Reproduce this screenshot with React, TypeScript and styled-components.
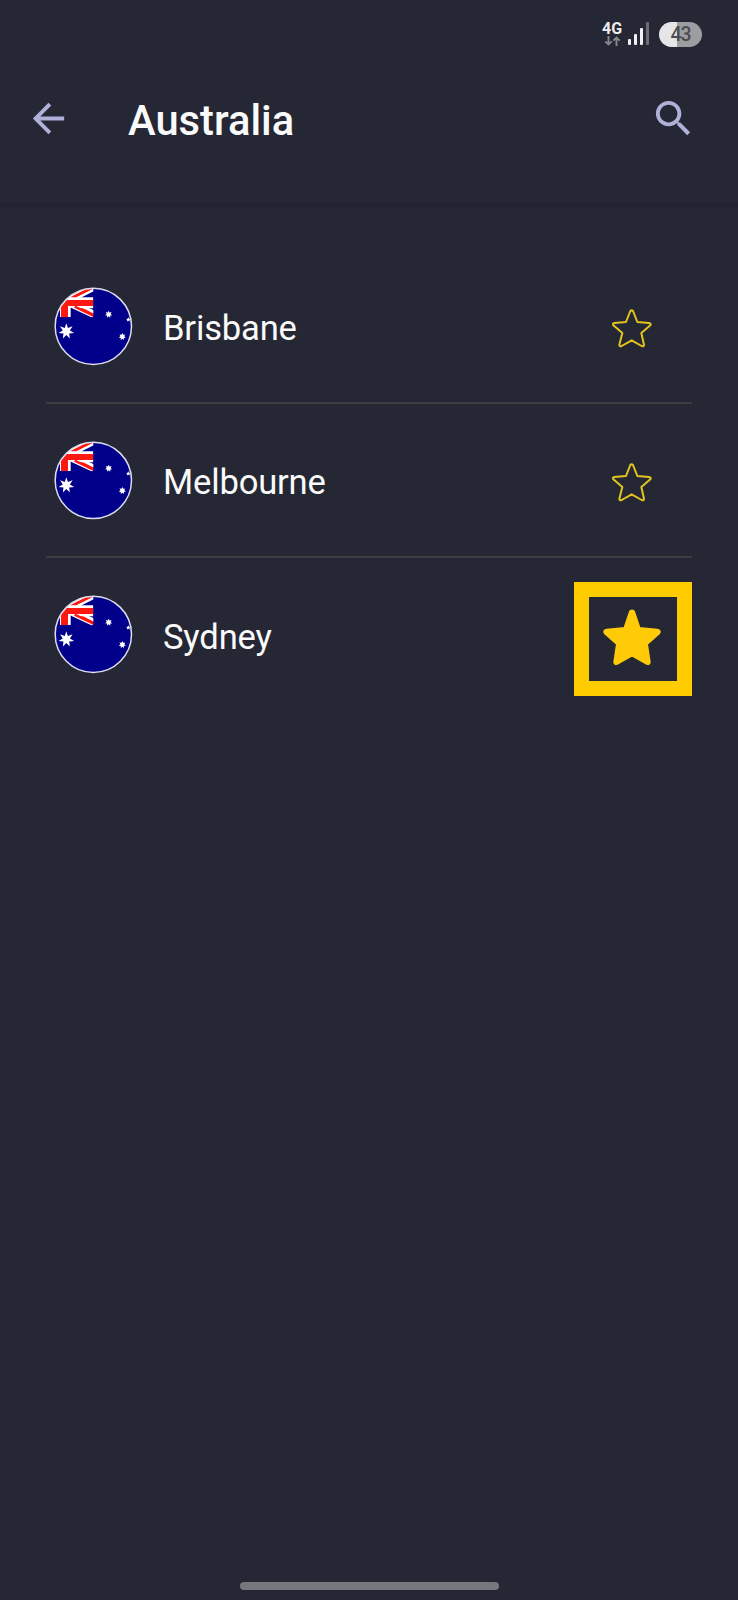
import React from "react";
import styled, { createGlobalStyle } from "styled-components";

const GlobalStyle = createGlobalStyle`
  * { box-sizing: border-box; }
  html, body { margin: 0; background: #252734; }
  svg { display: block; flex: none; }
`;

const Screen = styled.main`
  display: flex;
  flex-direction: column;
  width: 738px;
  height: 1600px;
  background: #252734;
  color: #fafafa;
  font-family: Roboto, "Noto Sans", sans-serif;
`;

const StatusBar = styled.div`
  display: flex;
  align-items: flex-start;
  justify-content: flex-end;
  height: 68px;
  padding: 22px 36px 0 0;
`;

const Network = styled.div`
  display: flex;
  flex-direction: column;
  align-items: center;
  width: 22px;
  margin-right: 5px;
  font: 700 16px/13px Roboto, sans-serif;
  color: #ececef;
`;

const NetworkArrows = styled.svg`
  margin-top: 1px;
`;

const Bars = styled.div`
  display: flex;
  align-items: flex-end;
  gap: 3px;
  height: 23px;
  margin-right: 10px;
`;

const Bar = styled.i<{ $height: number; $dim?: boolean }>`
  width: 3px;
  height: ${(p) => p.$height}px;
  border-radius: 1px;
  background: ${(p) => (p.$dim ? "#6b6c75" : "#f0f0f2")};
`;

const Battery = styled.div`
  width: 43px;
  height: 25px;
  border-radius: 13px;
  background: linear-gradient(90deg, #e6e6e8 43%, #9c9da1 43%);
  color: #4c4d52;
  font: 500 19.5px/26px Roboto, sans-serif;
  letter-spacing: -1px;
  text-align: center;
`;

const Header = styled.header`
  display: flex;
  align-items: flex-start;
  height: 137px;
  padding: 27px 41px 0 25px;
  border-bottom: 2px solid #22242f;
  box-shadow: 0 1px 2px rgba(30, 30, 42, 0.35);
`;

const Title = styled.h1`
  flex: 1;
  margin: 2px 0 0 56px;
  font-size: 41.7px;
  font-weight: 500;
  line-height: 48px;
`;

const List = styled.ul`
  flex: 1;
  margin: 0;
  padding: 45px 46px 0;
  list-style: none;
`;

const Row = styled.li<{ $last?: boolean }>`
  display: flex;
  align-items: center;
  height: 154px;
  padding: ${(p) => (p.$last ? "1px" : "0")} 0 0 8px;
  border-bottom: 2px solid ${(p) => (p.$last ? "transparent" : "#3e3c40")};
`;

const City = styled.span<{ $last?: boolean }>`
  flex: 1;
  margin: ${(p) => (p.$last ? "5px" : "3px")} 0 0 30px;
  font-size: 34.6px;
  line-height: 42px;
  letter-spacing: -0.18px;
`;

const StarButton = styled.button<{ $framed?: boolean }>`
  display: flex;
  align-items: center;
  justify-content: center;
  width: 118px;
  height: 114px;
  margin: ${(p) => (p.$framed ? "9px" : "4px")} 0 0;
  padding: 0 2px ${(p) => (p.$framed ? "3px" : "0")} 0;
  border: 15px solid ${(p) => (p.$framed ? "#ffcc00" : "transparent")};
  background: transparent;
`;

const HomeArea = styled.footer`
  display: flex;
  justify-content: center;
  height: 18px;
`;

const HomePill = styled.div`
  width: 259px;
  height: 8px;
  border-radius: 4px;
  background: #76777e;
`;

function starPoints(cx: number, cy: number, outer: number, inner: number, count: number) {
  return Array.from({ length: count * 2 }, (_, i) => {
    const r = i % 2 ? inner : outer;
    const a = (Math.PI * i) / count - Math.PI / 2;
    return `${(cx + r * Math.cos(a)).toFixed(2)},${(cy + r * Math.sin(a)).toFixed(2)}`;
  }).join(" ");
}

function Flag({ id }: { id: string }) {
  return (
    <svg width="79" height="79" viewBox="30 33 237 237">
      <clipPath id={id}>
        <circle cx="148" cy="151" r="114" />
      </clipPath>
      <g clipPath={`url(#${id})`}>
        <rect x="30" y="33" width="237" height="237" fill="#00008b" />
        <path d="M30 92 76 70 150 33M76 81 150 115" stroke="#fff" strokeWidth="22" />
        <path d="M80 67 146 34M96 90 150 117" stroke="#ff1712" strokeWidth="7.5" />
        <path d="M48 36H80V123H48ZM30 64H148V97H96L80 90Z" fill="#fff" />
        <path d="M51 72H72V124H51ZM40 72H148V90H40Z" fill="#ff1712" />
        <path d="M92 92 148 119M93 61 146 35" stroke="#ff1712" strokeWidth="7" />
        <path d="M148 33H170V125H148ZM30 124H165V140H30Z" fill="#00008b" />
        <polygon points={starPoints(67, 166, 24, 11, 7)} fill="#fff" />
        <polygon points={starPoints(194, 115, 11, 6, 7)} fill="#fff" />
        <polygon points={starPoints(235, 182, 11, 6, 7)} fill="#fff" />
        <polygon points={starPoints(253, 131, 7, 3.5, 5)} fill="#fff" />
      </g>
      <circle cx="148" cy="151" r="114.5" fill="none" stroke="#dcdcec" strokeWidth="4.5" />
    </svg>
  );
}

function OutlineStar() {
  return (
    <svg width="40" height="39" viewBox="67 55 120 117" fill="none" stroke="#e3c41e" strokeWidth="6" strokeLinejoin="round">
      <path d="M122 61Q126 57 130 61L143 94 178 97Q185 98 182 104L155 127 163 162Q163 169 156 166L126 149 96 166Q89 169 89 162L98 127 71 104Q68 98 74 97L109 94Z" />
    </svg>
  );
}

function FilledStar() {
  return (
    <svg width="58" height="57" viewBox="130 116 174 171" fill="#ffcb08" stroke="#ffcb08" strokeWidth="8" strokeLinejoin="round">
      <path d="M212 124Q217 119 222 124L239 174 293 179Q303 182 297 189L261 221 269 275Q269 283 261 279L217 254 173 279Q165 283 165 275L173 221 137 189Q131 182 141 179L195 174Z" />
    </svg>
  );
}

const cities = [
  { name: "Brisbane", favorite: false },
  { name: "Melbourne", favorite: false },
  { name: "Sydney", favorite: true },
];

export default function App() {
  return (
    <>
      <GlobalStyle />
      <Screen>
        <StatusBar>
          <Network>
            4G
            <NetworkArrows width="17" height="10" viewBox="0 0 16 10" fill="none" stroke="#85868e" strokeWidth="1.9">
              <path d="M4 0V8.5M.8 5.3 4 8.5 7.2 5.3M12 10V1.5M8.8 4.7 12 1.5 15.2 4.7" />
            </NetworkArrows>
          </Network>
          <Bars>
            <Bar $height={6} />
            <Bar $height={11} />
            <Bar $height={17} />
            <Bar $height={23} $dim />
          </Bars>
          <Battery>43</Battery>
        </StatusBar>
        <Header>
          <svg width="47" height="47" viewBox="0 0 24 24" fill="#b0b0d8">
            <path d="M20 11H7.83l5.59-5.59L12 4l-8 8 8 8 1.41-1.41L7.83 13H20v-2z" />
          </svg>
          <Title>Australia</Title>
          <svg width="47" height="47" viewBox="0 0 24 24" fill="#b0b0d8">
            <path d="M15.5 14h-.79l-.28-.27C15.41 12.59 16 11.11 16 9.5 16 5.91 13.09 3 9.5 3S3 5.91 3 9.5 5.91 16 9.5 16c1.61 0 3.09-.59 4.23-1.57l.27.28v.79l5 4.99L20.49 19l-4.99-5zm-6 0C7.01 14 5 11.99 5 9.5S7.01 5 9.5 5 14 7.01 14 9.5 11.99 14 9.5 14z" />
          </svg>
        </Header>
        <List>
          {cities.map(({ name, favorite }, i) => (
            <Row key={name} $last={i === cities.length - 1}>
              <Flag id={`flag-${name}`} />
              <City $last={i === cities.length - 1}>{name}</City>
              <StarButton $framed={favorite} aria-label={`Favorite ${name}`}>
                {favorite ? <FilledStar /> : <OutlineStar />}
              </StarButton>
            </Row>
          ))}
        </List>
        <HomeArea>
          <HomePill />
        </HomeArea>
      </Screen>
    </>
  );
}
